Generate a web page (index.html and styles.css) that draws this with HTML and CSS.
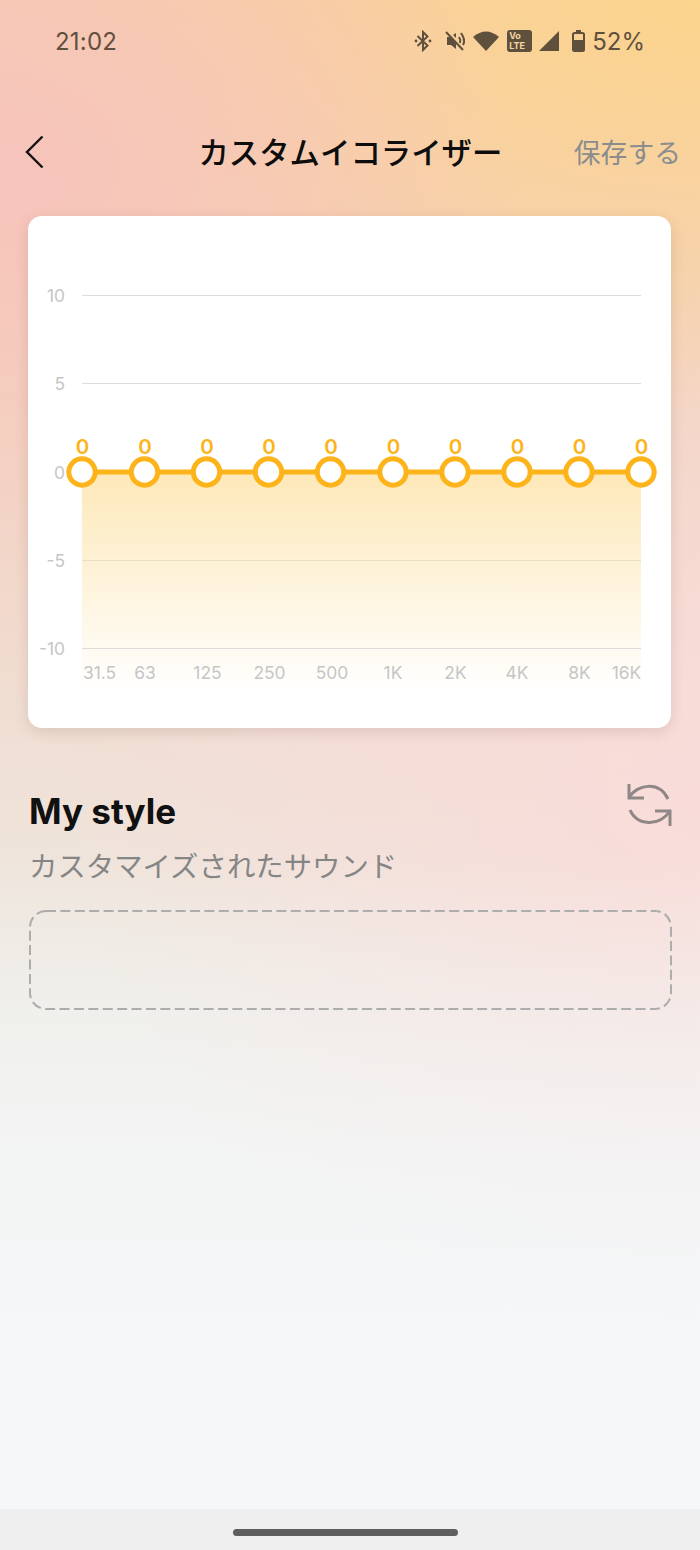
FILE: index.html
```html
<!DOCTYPE html>
<html lang="ja">
<head>
  <meta charset="UTF-8">
  <title>カスタムイコライザー</title>
  <link rel="stylesheet" href="styles.css">
</head>
<body>
  <div class="screen">
    <div class="status-bar">
      <span class="clock">21:02</span>
      <div class="status-icons">
        <!-- bluetooth -->
        <svg class="ic ic-bt" width="18" height="22" viewBox="0 0 18 22" fill="none" stroke="#5f503e" stroke-width="2">
          <path d="M3.5 6 L13.5 15.5 L9 20 V2 L13.5 6.5 L3.5 16"/>
          <circle cx="2" cy="11" r="1.4" fill="#5f503e" stroke="none"/>
          <circle cx="16" cy="11" r="1.4" fill="#5f503e" stroke="none"/>
        </svg>
        <!-- muted -->
        <svg class="ic ic-mute" width="20" height="22" viewBox="0 0 20 22" fill="none" stroke="#5f503e" stroke-width="2">
          <path d="M1 2 L18 20"/>
          <path d="M2 7 H5 L11 13 V19 L6 15 H2 Z" fill="#5f503e" stroke="none"/>
          <path d="M8 5 L11 3 V8 Z" fill="#5f503e" stroke="none"/>
          <path d="M14 7 Q16 10 15 13"/>
          <path d="M16 3 Q21 10 18 15"/>
        </svg>
        <!-- wifi -->
        <svg class="ic ic-wifi" width="26" height="22" viewBox="0 0 26 22">
          <path d="M0 7 Q13 -4 26 7 L13 21 Z" fill="#5f503e"/>
        </svg>
        <span class="volte">Vo<br>LTE</span>
        <!-- signal -->
        <svg class="ic ic-signal" width="20" height="22" viewBox="0 0 20 22">
          <path d="M0 21 L20 1 V21 Z" fill="#5f503e"/>
        </svg>
        <!-- battery -->
        <svg class="ic ic-battery" width="13" height="22" viewBox="0 0 13 22" fill="none">
          <path d="M4 0 H9 V2.5 H4 Z" fill="#5f503e"/>
          <rect x="1" y="3" width="11" height="18" rx="1.5" stroke="#5f503e" stroke-width="2"/>
          <rect x="1" y="10" width="11" height="11" fill="#5f503e"/>
        </svg>
        <span class="percent">52%</span>
      </div>
    </div>

    <header class="top-bar">
      <svg class="back" width="20" height="34" viewBox="0 0 20 34" fill="none" stroke="#111" stroke-width="2.4">
        <path d="M17.5 1.5 L2 17 L17.5 32.5"/>
      </svg>
      <h1 class="title">カスタムイコライザー</h1>
      <span class="save">保存する</span>
    </header>

    <div class="card">
      <svg class="chart" width="643" height="512" viewBox="28 216 643 512">
        <defs>
          <linearGradient id="eq-fill" x1="0" y1="0" x2="0" y2="1">
            <stop offset="0" stop-color="#fde8b8"/>
            <stop offset="1" stop-color="#ffffff"/>
          </linearGradient>
        </defs>
        <rect x="82" y="472" width="559" height="220" fill="url(#eq-fill)"/>

        <g stroke="#dcdcdc" stroke-width="1">
          <line x1="82" y1="295.5" x2="641" y2="295.5"/>
          <line x1="82" y1="383.5" x2="641" y2="383.5"/>
          <line x1="82" y1="560.5" x2="641" y2="560.5" stroke="#e6dfc8"/>
          <line x1="82" y1="648.5" x2="641" y2="648.5"/>
        </g>

        <g class="axis" text-anchor="end">
          <text x="65" y="302">10</text>
          <text x="65" y="390">5</text>
          <text x="65" y="479">0</text>
          <text x="65" y="567">-5</text>
          <text x="65" y="655">-10</text>
        </g>

        <g class="axis" text-anchor="middle">
          <text x="99.5" y="679">31.5</text>
          <text x="145" y="679">63</text>
          <text x="207.5" y="679">125</text>
          <text x="269.5" y="679">250</text>
          <text x="332" y="679">500</text>
          <text x="393" y="679">1K</text>
          <text x="455.5" y="679">2K</text>
          <text x="517" y="679">4K</text>
          <text x="579.5" y="679">8K</text>
          <text x="626.5" y="679">16K</text>
        </g>

        <line x1="82" y1="472" x2="641" y2="472" stroke="#fdb31a" stroke-width="5"/>

        <g fill="#fff" stroke="#fdb31a" stroke-width="5">
          <circle cx="82" cy="472" r="13.2"/>
          <circle cx="144.5" cy="472" r="13.2"/>
          <circle cx="206.5" cy="472" r="13.2"/>
          <circle cx="268.5" cy="472" r="13.2"/>
          <circle cx="330.5" cy="472" r="13.2"/>
          <circle cx="393" cy="472" r="13.2"/>
          <circle cx="455" cy="472" r="13.2"/>
          <circle cx="517" cy="472" r="13.2"/>
          <circle cx="579" cy="472" r="13.2"/>
          <circle cx="641" cy="472" r="13.2"/>
        </g>

        <g class="value" text-anchor="middle">
          <text x="82.5" y="453.5">0</text>
          <text x="145" y="453.5">0</text>
          <text x="207" y="453.5">0</text>
          <text x="269" y="453.5">0</text>
          <text x="331" y="453.5">0</text>
          <text x="393.5" y="453.5">0</text>
          <text x="455.5" y="453.5">0</text>
          <text x="517.5" y="453.5">0</text>
          <text x="579.5" y="453.5">0</text>
          <text x="641.5" y="453.5">0</text>
        </g>
      </svg>
    </div>

    <section class="style-section">
      <div class="style-head">
        <h2 class="style-title">My style</h2>
        <svg class="refresh" width="46" height="46" viewBox="0 0 46 46" fill="none" stroke="#8e8786" stroke-width="3">
          <path d="M2 1 V15 H17"/>
          <path d="M2.5 14 C9 2 32 -3 41 16"/>
          <path d="M43 43 V28 H28"/>
          <path d="M3 27 C10 43 32 44 43 28"/>
        </svg>
      </div>
      <p class="style-sub">カスタマイズされたサウンド</p>
      <svg class="drop-box" width="643" height="100" viewBox="0 0 643 100" fill="none">
        <rect x="1" y="1" width="641" height="98" rx="16" stroke="#adadad" stroke-width="2" stroke-dasharray="10 4.4"/>
      </svg>
    </section>

    <div class="nav-bar">
      <div class="home-pill"></div>
    </div>
  </div>
</body>
</html>
```

FILE: styles.css
```css
html, body {
  margin: 0;
  padding: 0;
}

body {
  font-family: 'Inter', 'Noto Sans CJK JP', sans-serif;
  color: #111;
}

.screen {
  width: 700px;
  height: 1550px;
  display: flex;
  flex-direction: column;
  overflow: hidden;
  background-color: #f5f7f9;
  background-image:
    linear-gradient(180deg, rgba(245, 247, 249, 0) 55%, rgba(245, 247, 249, 0.7) 75%, #f5f7f9 92%),
    radial-gradient(520px 380px at 0% 170px, #f7c3bb 0%, rgba(247, 195, 187, 0) 100%),
    radial-gradient(720px 420px at 100% 0%, #fbd48d 0%, rgba(251, 212, 141, 0) 100%),
    radial-gradient(640px 520px at 100% 800px, #f9dcd9 0%, rgba(249, 220, 217, 0) 100%),
    linear-gradient(180deg, #f6cdb0 0%, #f2d6c8 35%, #edebe4 65%, #f1f3f2 100%);
}

/* status bar */
.status-bar {
  height: 82px;
  flex-shrink: 0;
  display: flex;
  justify-content: space-between;
  align-items: center;
  padding: 0 55px;
  box-sizing: border-box;
  color: #5f503e;
}

.clock {
  font-size: 24px;
  letter-spacing: 0.2px;
}

.status-icons {
  display: flex;
  align-items: center;
}

.ic {
  display: block;
}

.ic-mute {
  margin-left: 13px;
}

.ic-wifi {
  margin-left: 8px;
}

.ic-signal {
  margin-left: 7px;
}

.ic-battery {
  margin-left: 13px;
}

.volte {
  width: 25px;
  height: 22px;
  margin-left: 8px;
  background: #5f503e;
  border-radius: 3px;
  color: #f6d59f;
  font-size: 9px;
  font-weight: 700;
  line-height: 10px;
  padding: 1px 0 0 2px;
  box-sizing: border-box;
}

.percent {
  margin-left: 7px;
  font-size: 24px;
  letter-spacing: 0;
  color: #5f503e;
}

/* header */
.top-bar {
  height: 68px;
  margin-top: 35px;
  flex-shrink: 0;
  display: flex;
  align-items: center;
  justify-content: space-between;
  padding: 0 19px 0 25px;
}

.back {
  display: block;
  width: 20px;
  margin-top: 2px;
}

.title {
  margin: 0 0 0 82px;
  font-size: 30.4px;
  font-weight: 500;
  letter-spacing: 0;
  color: #0d0d0d;
}

.save {
  font-size: 26.8px;
  color: #8a8c8e;
}

/* chart card */
.card {
  width: 643px;
  height: 512px;
  margin: 31px 0 0 28px;
  background: #fff;
  border-radius: 14px;
  box-shadow: 0 4px 14px rgba(90, 60, 50, 0.14);
  flex-shrink: 0;
}

.chart {
  display: block;
}

.axis text {
  font-family: 'Inter', sans-serif;
  font-size: 17.4px;
  fill: #c6c6c6;
}

.value text {
  font-family: 'Inter', sans-serif;
  font-size: 20.5px;
  font-weight: 600;
  fill: #fdb31a;
}

/* my style */
.style-section {
  padding: 52px 28px 0;
  flex: 1;
}

.style-head {
  display: flex;
  justify-content: space-between;
  align-items: flex-start;
}

.style-title {
  margin: 11px 0 0 1px;
  font-size: 35px;
  line-height: 40px;
  font-weight: 700;
  color: #111;
}

.refresh {
  margin-right: -1px;
  margin-top: 3px;
  display: block;
}

.style-sub {
  margin: 18px 0 0 1px;
  font-size: 28.4px;
  line-height: 36px;
  color: #858585;
}

.drop-box {
  display: block;
  margin: 25px 0 0 1px;
}

/* bottom nav */
.nav-bar {
  height: 41px;
  flex-shrink: 0;
  background: #efefef;
  display: flex;
  justify-content: center;
  align-items: center;
}

.home-pill {
  width: 225px;
  height: 7px;
  margin: 6px 10px 0 0;
  background: #5e5e5e;
  border-radius: 4px;
}
```
